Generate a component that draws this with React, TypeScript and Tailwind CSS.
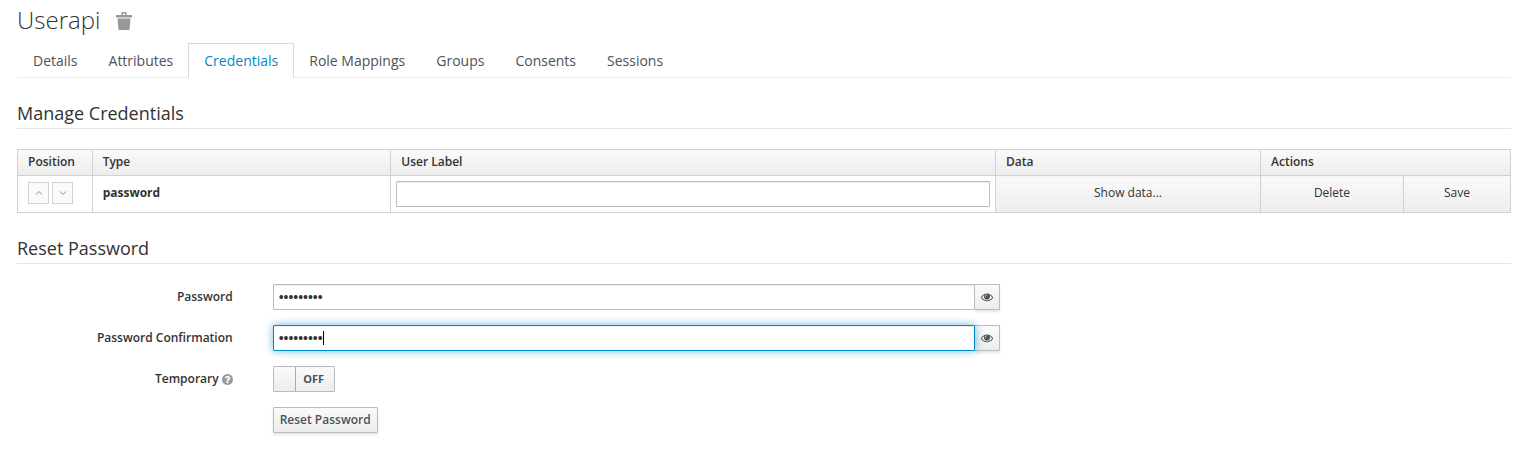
import { useState } from "react";
import type { ReactNode } from "react";

const tabs = ["Details", "Attributes", "Credentials", "Role Mappings", "Groups", "Consents", "Sessions"];

function TrashIcon() {
  return (
    <svg viewBox="0 0 16 18" className="h-[18px] w-4" fill="currentColor" aria-hidden="true">
      <path fillRule="evenodd" d="M5.500 0h5v3H16v2.500H0V3h5.500zM7 1.500V3h2V1.500z" />
      <path d="M1.500 6.500h13L13.500 18h-11z" />
    </svg>
  );
}

function EyeIcon() {
  return (
    <svg viewBox="0 0 1792 1792" className="size-3" fill="currentColor" aria-hidden="true">
      <path d="M1664 960q-152-236-381-353 61 104 61 225 0 185-131.500 316.500t-316.500 131.500-316.500-131.500-131.500-316.500q0-121 61-225-229 117-381 353 133 205 333.500 326.500t434.500 121.500 434.500-121.500 333.500-326.500zm-720-384q0-20-14-34t-34-14q-125 0-214.500 89.500t-89.500 214.500q0 20 14 34t34 14 34-14 14-34q0-86 61-147t147-61q20 0 34-14t14-34zm848 384q0 34-20 69-140 230-376.500 368.500t-499.500 138.500-499.500-139-376.500-368q-20-35-20-69t20-69q140-229 376.500-368t499.500-139 499.500 139 376.500 368q20 35 20 69z" />
    </svg>
  );
}

function HelpIcon() {
  return (
    <svg viewBox="128 128 1536 1536" className="size-[11px] text-[#999]" fill="currentColor" aria-hidden="true">
      <path d="M1024 1376v-192q0-14-9-23t-23-9h-192q-14 0-23 9t-9 23v192q0 14 9 23t23 9h192q14 0 23-9t9-23zm256-672q0-88-55.500-163t-138.500-116-170-41q-243 0-371 213-15 24 8 42l132 100q7 6 19 6 16 0 25-12 53-68 86-92 34-24 86-24 48 0 85.500 26t37.500 59q0 38-20 61t-68 45q-63 28-115.500 86.500t-52.500 125.500v36q0 14 9 23t23 9h192q14 0 23-9t9-23q0-19 21.500-49.500t54.500-49.500q32-18 49-28.500t46-35 44.500-48 28-60.500 12.500-81zm384 192q0 209-103 385.500t-279.500 279.500-385.500 103-385.500-103-279.500-279.500-103-385.500 103-385.500 279.500-279.500 385.500-103 385.500 103 279.500 279.500 103 385.500z" />
    </svg>
  );
}

function MoveButton({ label, points }: { label: string; points: string }) {
  return (
    <button
      type="button"
      aria-label={label}
      className="flex h-[22px] w-[21px] items-center justify-center border border-[#d1d1d1] bg-[#fafafa] text-[#8b8d8f]"
    >
      <svg viewBox="0 0 8 6" className="h-[6px] w-2" fill="none" stroke="currentColor" aria-hidden="true">
        <polyline points={points} />
      </svg>
    </button>
  );
}

function SectionTitle({ children }: { children: ReactNode }) {
  return (
    <h2 className="border-b border-[#e5e5e5] pb-[3px] text-lg leading-6 font-normal text-[#333]">{children}</h2>
  );
}

function FormRow({ label, htmlFor, help, children }: { label?: string; htmlFor?: string; help?: boolean; children: ReactNode }) {
  return (
    <div className="-mx-5 flex">
      <div className="flex w-1/6 items-center justify-end gap-[3px] px-5 text-[#333]">
        {label && (
          <label htmlFor={htmlFor} className="font-semibold">
            {label}
          </label>
        )}
        {help && <HelpIcon />}
      </div>
      <div className="w-1/2 px-5">{children}</div>
    </div>
  );
}

function PasswordField({ id, autoFocus }: { id: string; autoFocus?: boolean }) {
  const [value, setValue] = useState("secret123");
  const [shown, setShown] = useState(false);
  return (
    <div className="flex">
      <div className="relative min-w-0 flex-1">
        <input
          id={id}
          type={shown ? "text" : "password"}
          value={value}
          autoFocus={autoFocus}
          onChange={(e) => setValue(e.target.value)}
          className="peer block h-[26px] w-full rounded-l-[1px] border border-[#bbb] bg-white px-[5px] text-[13px] font-bold text-[#333] caret-transparent shadow-[inset_0_1px_1px_rgba(0,0,0,0.075)] outline-none focus:border-[#0088ce] focus:shadow-[inset_0_1px_1px_rgba(0,0,0,0.075),0_0_8px_rgba(0,136,206,0.6)]"
        />
        <span
          aria-hidden="true"
          className="pointer-events-none absolute top-[6px] left-[6px] hidden h-[14px] border-r border-black text-[13px] leading-[14px] font-bold peer-focus:block"
        >
          <span className="invisible">{shown ? value : "•".repeat(value.length)}</span>
        </span>
      </div>
      <button
        type="button"
        aria-label="Show or hide password"
        onClick={() => setShown(!shown)}
        className="flex h-[26px] w-[25px] items-center justify-center rounded-r-[1px] border border-l-0 border-[#bbb] bg-linear-to-b from-[#fafafa] to-[#ededed] text-[#4d5258] shadow-[0_2px_3px_rgba(3,3,3,0.1)]"
      >
        <EyeIcon />
      </button>
    </div>
  );
}

const cell = "border border-[#d1d1d1]";
const raised = "bg-linear-to-b from-[#fafafa] to-[#ededed]";

export default function App() {
  const [temporary, setTemporary] = useState(false);
  return (
    <main className="bg-white pt-[3px] pr-3 pb-5 pl-[17px] font-['Open_Sans',sans-serif] text-xs leading-5 text-[#333]">
      <header className="flex h-[35px] items-center gap-4">
        <h1 className="pb-[2px] text-2xl leading-8 font-light">Userapi</h1>
        <button type="button" aria-label="Delete user" className="text-[#999]">
          <TrashIcon />
        </button>
      </header>

      <nav className="mt-[5px] flex border-b border-[#ededec] text-sm leading-5">
        {tabs.map((tab) => (
          <a
            key={tab}
            href="#"
            aria-current={tab === "Credentials" ? "page" : undefined}
            className={
              tab === "Credentials"
                ? "-mr-px -mb-px border border-b-0 border-[#d9dadb] bg-white px-[15px] pt-[7px] pb-[7px] text-[#0088ce]"
                : "-mr-px border border-b-0 border-transparent px-[15px] pt-[7px] pb-[6px] text-[#4d5258]"
            }
          >
            {tab}
          </a>
        ))}
      </nav>

      <section className="mt-[23px]">
        <SectionTitle>Manage Credentials</SectionTitle>
        <table className="mt-5 w-full border-collapse">
          <colgroup>
            <col className="w-[5%]" />
            <col className="w-[20%]" />
            <col />
            <col className="w-[265px]" />
            <col className="w-[143px]" />
            <col className="w-[107px]" />
          </colgroup>
          <thead>
            <tr className={`text-left ${raised}`}>
              <th className={`${cell} px-[10px] pt-[2px] pb-[3px] font-semibold`}>Position</th>
              <th className={`${cell} px-[10px] pt-[2px] pb-[3px] font-semibold`}>Type</th>
              <th className={`${cell} px-[10px] pt-[2px] pb-[3px] font-semibold`}>User Label</th>
              <th className={`${cell} px-[10px] pt-[2px] pb-[3px] font-semibold`}>Data</th>
              <th colSpan={2} className={`${cell} px-[10px] pt-[2px] pb-[3px] font-semibold`}>
                Actions
              </th>
            </tr>
          </thead>
          <tbody>
            <tr className="h-[37px]">
              <td className={`${cell} px-[10px] pb-[2px]`}>
                <div className="flex gap-[3px]">
                  <MoveButton label="Move up" points="1,4.500 4,1.500 7,4.500" />
                  <MoveButton label="Move down" points="1,1.500 4,4.500 7,1.500" />
                </div>
              </td>
              <td className={`${cell} px-[10px] pb-[2px] font-bold`}>password</td>
              <td className={`${cell} px-[5px]`}>
                <input
                  type="text"
                  aria-label="User label"
                  className="block h-[26px] w-full rounded-[1px] border border-[#bbb] bg-white px-[5px] shadow-[inset_0_1px_1px_rgba(0,0,0,0.075)] outline-none"
                />
              </td>
              <td className={`${cell} ${raised} pb-[2px]`}>
                <button type="button" className="block w-full">Show data...</button>
              </td>
              <td className={`${cell} ${raised} pb-[2px]`}>
                <button type="button" className="block w-full">Delete</button>
              </td>
              <td className={`${cell} ${raised} pb-[2px]`}>
                <button type="button" className="block w-full">Save</button>
              </td>
            </tr>
          </tbody>
        </table>
      </section>

      <section className="mt-[23px]">
        <SectionTitle>Reset Password</SectionTitle>
        <form className="mt-5 flex flex-col gap-[15px]" onSubmit={(e) => e.preventDefault()}>
          <FormRow label="Password" htmlFor="password">
            <PasswordField id="password" />
          </FormRow>
          <FormRow label="Password Confirmation" htmlFor="confirmation">
            <PasswordField id="confirmation" autoFocus />
          </FormRow>
          <FormRow label="Temporary" htmlFor="temporary" help>
            <label className="flex h-[26px] w-[62px] cursor-pointer overflow-hidden rounded-[1px] border border-[#bbb] bg-linear-to-b from-[#fafafa] to-[#ededed] text-[11px] leading-6 font-bold text-[#4d5258]">
              <input
                id="temporary"
                type="checkbox"
                checked={temporary}
                onChange={(e) => setTemporary(e.target.checked)}
                className="sr-only"
              />
              <span className={temporary ? "order-2 w-[22px] border-l border-[#aaa]" : "w-[22px] border-r border-[#aaa]"} />
              <span className="flex-1 pr-[2px] text-center">{temporary ? "ON" : "OFF"}</span>
            </label>
          </FormRow>
          <FormRow>
            <button
              type="submit"
              className="h-[26px] rounded-[1px] border border-[#bbb] bg-linear-to-b from-[#fafafa] to-[#ededed] px-[6px] font-semibold text-[#4d5258] shadow-[0_2px_3px_rgba(3,3,3,0.1)]"
            >
              Reset Password
            </button>
          </FormRow>
        </form>
      </section>
    </main>
  );
}
